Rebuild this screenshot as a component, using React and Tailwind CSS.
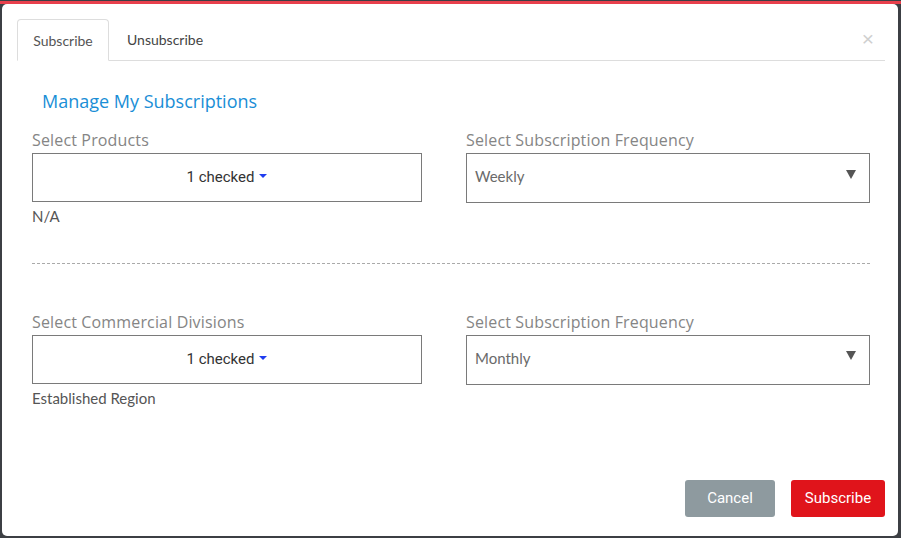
import React from "react";

const Caret = () => (
  <svg width="8" height="5" viewBox="0 0 8 5" className="inline-block ml-[5px] mb-[2px]">
    <path d="M0 0 L8 0 L4 4 Z" fill="#1f3cf0" />
  </svg>
);

const CheckedBox = () => (
  <div className="h-[49px] w-[390px] border border-[#7a7a7a] flex items-center justify-center font-['Roboto'] text-[15px] text-[#333]">
    1 checked
    <Caret />
  </div>
);

const FreqSelect = ({ value }) => (
  <div className="h-[50px] w-[404px] border border-[#7a7a7a] flex items-center justify-between pl-[8px] pr-[13px]">
    <span className="font-['Lato'] text-[15px] text-[#6a6a6a] mb-[3px]">{value}</span>
    <svg width="10" height="9" viewBox="0 0 10 9" className="mb-[8px]">
      <path d="M0 0 L10 0 L5 9 Z" fill="#555" />
    </svg>
  </div>
);

const Label = ({ children }) => (
  <div className="font-['Open_Sans'] text-[16px] tracking-[0.15px] leading-[20px] text-[#858585] mb-[3px]">{children}</div>
);

const Section = ({ label, value, note }) => (
  <div className="flex gap-[44px]">
    <div className="w-[390px]">
      <Label>{label}</Label>
      <CheckedBox />
      <div className="font-['Lato'] text-[15px] text-[#555] mt-[3px]">{note}</div>
    </div>
    <div className="w-[404px]">
      <Label>Select Subscription Frequency</Label>
      <FreqSelect value={value} />
    </div>
  </div>
);

export default function App() {
  return (
    <div className="w-[901px] h-[538px] bg-[linear-gradient(#3c3f44_0_1px,#e8404c_1px_4px,#3c3f44_4px)] pt-[4px] pl-[2px] pr-[3px] pb-[2px]">
      <div className="h-full bg-white rounded-[5px] flex flex-col pt-[15px]">
        {/* tabs */}
        <div className="ml-[15px] mr-[13px] flex items-end border-b border-[#dddddd]">
          <div className="h-[42px] w-[92px] -mb-px border border-[#dddddd] border-b-white rounded-t-[4px] bg-white flex items-center justify-center font-['Lato'] text-[14px] text-[#555]">
            Subscribe
          </div>
          <div className="h-[41px] px-[18px] flex items-center font-['Lato'] text-[14px] text-[#444]">Unsubscribe</div>
          <div className="ml-auto mr-[11px] self-center mb-[2px] text-[#cfcfcf] text-[21px] leading-none font-['Liberation_Sans']">×</div>
        </div>

        <div className="pl-[30px]">
          <div className="mt-[28px] ml-[10px] font-['Open_Sans'] text-[18px] leading-[24px] text-[#1a8ed6]">Manage My Subscriptions</div>

          <div className="mt-[17px]">
            <Section label="Select Products" value="Weekly" note="N/A" />
          </div>

          <div className="mt-[35px] mb-[48px] w-[838px] border-t border-dashed border-[#aaaaaa]" />

          <Section label="Select Commercial Divisions" value="Monthly" note="Established Region" />
        </div>

        <div className="mt-auto mb-[19px] mr-[13px] flex justify-end gap-[16px]">
          <button className="h-[37px] w-[90px] rounded-[3px] bg-[#8e9a9f] text-white font-['Roboto'] text-[15px]">Cancel</button>
          <button className="h-[37px] w-[94px] rounded-[3px] bg-[#e0141b] text-white font-['Roboto'] text-[15px]">Subscribe</button>
        </div>
      </div>
    </div>
  );
}
